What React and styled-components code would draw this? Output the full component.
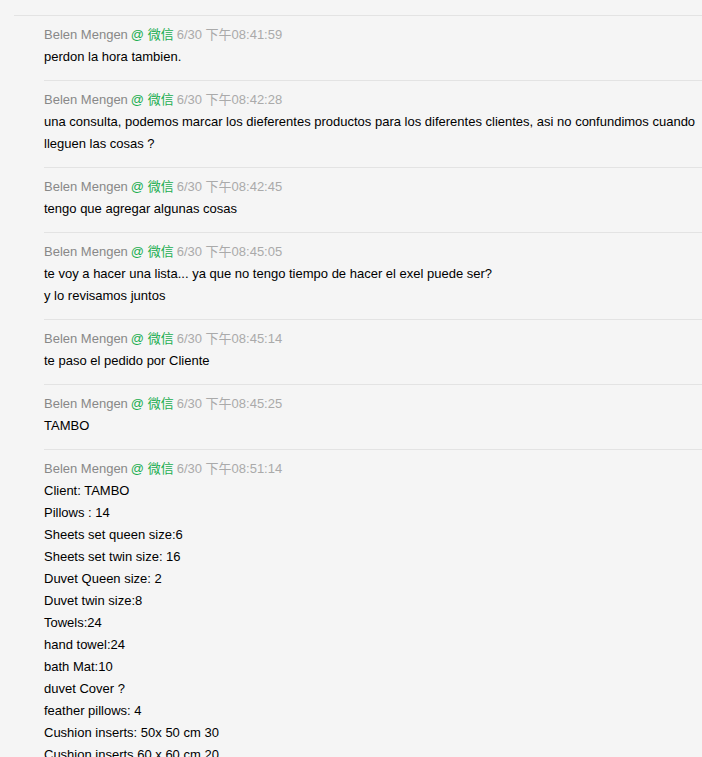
import React from "react";
import styled, { createGlobalStyle } from "styled-components";

const GlobalStyle = createGlobalStyle`
  html, body {
    margin: 0;
    padding: 0;
    background: #f5f5f5;
  }
  body {
    font-family: "Liberation Sans", "Noto Sans CJK SC", sans-serif;
    font-size: 13px;
  }
`;

const messages = [
  { time: "08:41:59", lines: ["perdon la hora tambien."] },
  {
    time: "08:42:28",
    lines: [
      "una consulta, podemos marcar los dieferentes productos para los diferentes clientes, asi no confundimos cuando lleguen las cosas ?",
    ],
  },
  { time: "08:42:45", lines: ["tengo que agregar algunas cosas"] },
  {
    time: "08:45:05",
    lines: [
      "te voy a hacer una lista... ya que no tengo tiempo de hacer el exel puede ser?",
      "y lo revisamos juntos",
    ],
  },
  { time: "08:45:14", lines: ["te paso el pedido por Cliente"] },
  { time: "08:45:25", lines: ["TAMBO"] },
  {
    time: "08:51:14",
    lines: [
      "Client: TAMBO",
      "Pillows : 14",
      "Sheets set queen size:6",
      "Sheets set twin size: 16",
      "Duvet Queen size: 2",
      "Duvet twin size:8",
      "Towels:24",
      "hand towel:24",
      "bath Mat:10",
      "duvet Cover ?",
      "feather pillows: 4",
      "Cushion inserts: 50x 50 cm 30",
      "Cushion inserts 60 x 60 cm 20",
    ],
  },
];

const App = () => {
  return (
    <>
      <GlobalStyle />
      <Page>
        <MessageList>
          {messages.map((msg, i) => (
            <Message key={i}>
              <MsgHead>
                <Sender>Belen Mengen</Sender>
                <Source>@ 微信</Source>
                <Time>6/30 下午{msg.time}</Time>
              </MsgHead>
              <MsgBody>
                {msg.lines.map((line, j) => (
                  <p key={j}>{line}</p>
                ))}
              </MsgBody>
            </Message>
          ))}
        </MessageList>
      </Page>
    </>
  );
};

const Page = styled.div`
  padding-top: 15px;
  height: 757px;
  overflow: hidden;
  box-sizing: border-box;
`;

const MessageList = styled.div`
  margin-left: 14px;
  border-top: 1px solid #e3e3e3;
`;

const Message = styled.div`
  margin-left: 30px;
  padding: 8px 0 12px;
  & + & {
    border-top: 1px solid #e3e3e3;
  }
`;

const MsgHead = styled.div`
  line-height: 22px;
  white-space: nowrap;
`;

const Sender = styled.span`
  color: #888;
`;

const Source = styled.span`
  color: #1aad4f;
  margin: 0 3px 0 3px;
`;

const Time = styled.span`
  color: #aaa;
`;

const MsgBody = styled.div`
  color: #000;
  line-height: 22px;
  p {
    margin: 0;
  }
`;

export default App;
